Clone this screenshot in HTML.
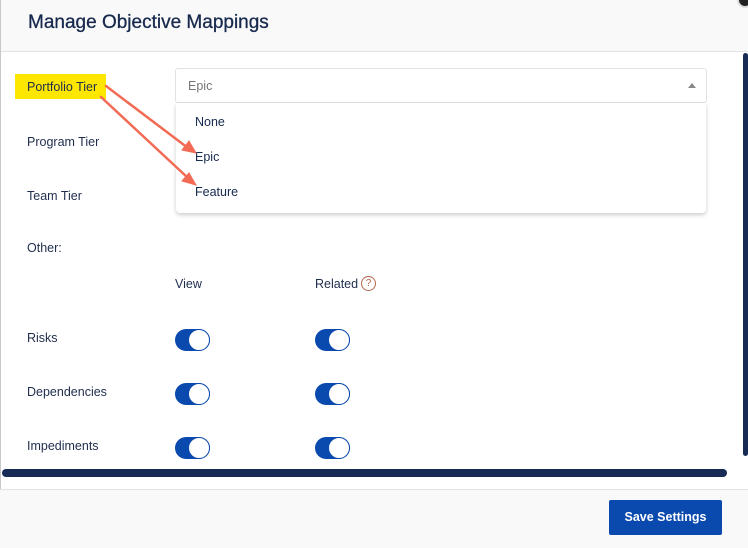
<!DOCTYPE html>
<html><head><meta charset="utf-8"><style>
*{margin:0;padding:0;box-sizing:border-box}
body{width:748px;height:548px;overflow:hidden;background:#fff;font-family:"Liberation Sans",sans-serif;position:relative;color:#1f2d4d}
.hdr{position:absolute;left:0;top:0;width:748px;height:52px;background:#f9f9f9;border-bottom:1px solid #e3e3e3}
.hdr h1{position:absolute;left:28px;top:12px;font-size:19px;font-weight:normal;color:#17294d;-webkit-text-stroke:0.3px #17294d}
.lb{position:absolute;left:0;top:0;width:1px;height:548px;background:#c8c8c8}
.t{position:absolute;font-size:12.5px;color:#1f2d4d}
.hl{position:absolute;left:15px;top:74px;width:91px;height:25px;background:#fde700}
.sel{position:absolute;left:175px;top:68px;width:532px;height:35px;border:1px solid #e2e2e2;border-radius:3px;background:#fff}
.sel span{position:absolute;left:12px;top:10px;font-size:12.5px;color:#777}
.sel i{position:absolute;right:10px;top:14px;width:0;height:0;border-left:4px solid transparent;border-right:4px solid transparent;border-bottom:5px solid #888}
.dd{position:absolute;left:176px;top:103px;width:530px;height:110px;background:#fff;border-radius:0 0 4px 4px;box-shadow:0 2px 4px rgba(0,0,0,.2)}
.dd div{position:absolute;left:19px;font-size:12.5px;color:#17294d}
.tg{position:absolute;width:35px;height:22px;border-radius:11px;background:#0a49ad}
.tg:after{content:"";position:absolute;right:0;top:0;width:22px;height:22px;border-radius:50%;background:#fff;border:1.5px solid #0a49ad;box-sizing:border-box}
.hs{position:absolute;left:2px;top:469px;width:725px;height:8px;border-radius:4px;background:#172b55}
.vs{position:absolute;left:743px;top:53px;width:5px;height:403px;border-radius:3px;background:#172b55}
.ftr{position:absolute;left:0;top:489px;width:748px;height:59px;background:#f9f9f9;border-top:1px solid #e3e3e3}
.btn{position:absolute;left:609px;top:500px;width:113px;height:35px;background:#0a49ad;border-radius:2px;color:#fff;font-size:12.5px;font-weight:bold;text-align:center;line-height:35px}
.q{position:absolute;left:361px;top:276px;width:15px;height:15px;border-radius:50%;border:1px solid #b7654f;color:#b7654f;font-size:10px;text-align:center;line-height:13px}
</style></head><body>
<div class="hdr"><h1>Manage Objective Mappings</h1></div>
<div class="lb"></div>
<div style="position:absolute;left:737px;top:-8px;width:16px;height:16px;border-radius:50%;background:#222;border:2px solid #ddd"></div>
<div class="hl"></div>
<div class="t" style="left:27px;top:80px">Portfolio Tier</div>
<div class="t" style="left:27px;top:135px">Program Tier</div>
<div class="t" style="left:27px;top:189px">Team Tier</div>
<div class="t" style="left:27px;top:241px">Other:</div>
<div class="sel"><span>Epic</span><i></i></div>
<div class="dd"><div style="top:12px">None</div><div style="top:47px">Epic</div><div style="top:82px">Feature</div></div>
<svg style="position:absolute;left:0;top:0" width="748" height="548">
<g stroke="#f26b55" stroke-width="2.5" fill="#f26b55" stroke-linecap="round">
<line x1="106" y1="86" x2="188" y2="148"/>
<polygon points="196,153 182,150 189,141" stroke-width="1"/>
<line x1="101" y1="97" x2="188" y2="178"/>
<polygon points="196,185 182,181 189,173" stroke-width="1"/>
</g></svg>
<div class="t" style="left:175px;top:277px">View</div>
<div class="t" style="left:315px;top:277px">Related</div>
<div class="q">?</div>
<div class="t" style="left:27px;top:331px">Risks</div>
<div class="t" style="left:27px;top:385px">Dependencies</div>
<div class="t" style="left:27px;top:439px">Impediments</div>
<div class="tg" style="left:175px;top:329px"></div><div class="tg" style="left:315px;top:329px"></div>
<div class="tg" style="left:175px;top:383px"></div><div class="tg" style="left:315px;top:383px"></div>
<div class="tg" style="left:175px;top:437px"></div><div class="tg" style="left:315px;top:437px"></div>
<div class="hs"></div>
<div class="vs"></div>
<div class="ftr"></div>
<div class="btn">Save Settings</div>
</body></html>
